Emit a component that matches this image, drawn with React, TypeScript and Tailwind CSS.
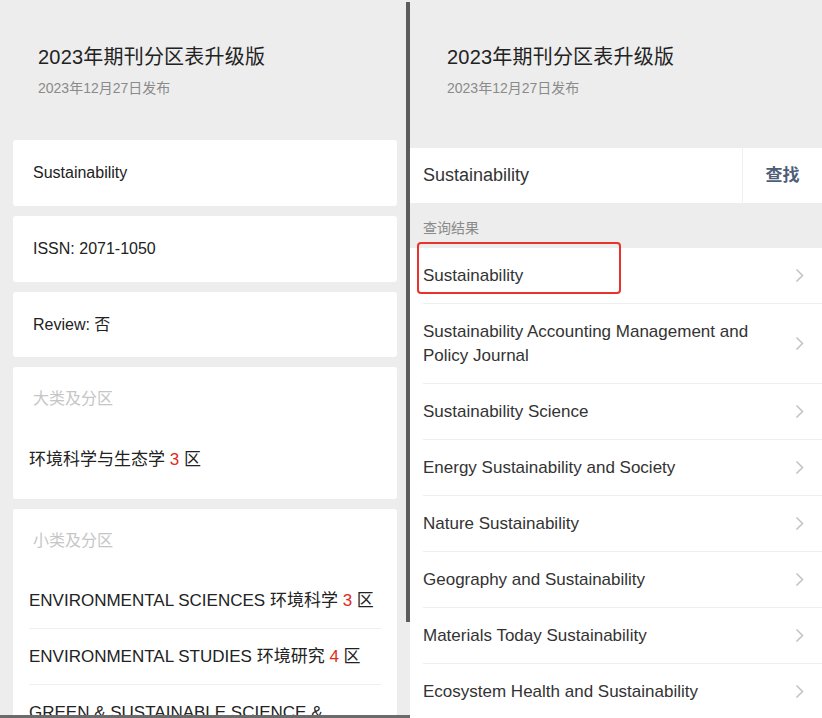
import React from "react"

const results: string[][] = [
  ["Sustainability"],
  ["Sustainability Accounting Management and", "Policy Journal"],
  ["Sustainability Science"],
  ["Energy Sustainability and Society"],
  ["Nature Sustainability"],
  ["Geography and Sustainability"],
  ["Materials Today Sustainability"],
  ["Ecosystem Health and Sustainability"],
]

const minor = [
  { en: "ENVIRONMENTAL SCIENCES", zh: "环境科学", zone: "3" },
  { en: "ENVIRONMENTAL STUDIES", zh: "环境研究", zone: "4" },
  { en: "GREEN & SUSTAINABLE SCIENCE &", zh: "", zone: "" },
]

function Chevron() {
  return (
    <svg width="9" height="15" viewBox="0 0 9 15" fill="none" className="shrink-0">
      <polyline points="1.5,1.5 7.5,7.5 1.5,13.5" stroke="#c4c4c4" strokeWidth="1.6" />
    </svg>
  )
}

function Header() {
  return (
    <div className="pt-[45px]">
      <div className="text-[20px] leading-[24px] tracking-[0.2px] text-[#222]">2023年期刊分区表升级版</div>
      <div className="mt-[9px] text-[14px] leading-[20px] text-[#8a8a8a]">2023年12月27日发布</div>
    </div>
  )
}

function LeftPanel() {
  return (
    <div className="relative w-[410px] shrink-0 h-full overflow-hidden">
      <div className="px-[13px]">
        <div className="h-[140px] pl-[25px]">
          <Header />
        </div>
        <div className="flex flex-col gap-[10px]">
          <div className="h-[66px] bg-white rounded-[3px] flex items-center px-[20px] text-[16px] text-[#222]">
            Sustainability
          </div>
          <div className="h-[66px] bg-white rounded-[3px] flex items-center px-[20px] text-[16px] text-[#222]">
            ISSN: 2071-1050
          </div>
          <div className="h-[65px] bg-white rounded-[3px] flex items-center px-[20px] text-[16px] text-[#222]">
            Review: 否
          </div>
          <div className="h-[132px] bg-white rounded-[3px] pt-[21px] leading-[22px]">
            <div className="pl-[20px] text-[16px] text-[#c6c6c6]">大类及分区</div>
            <div className="mt-[39px] pl-[16px] text-[17px] text-[#222]">
              环境科学与生态学 <span className="text-[#e02b20]">3</span> 区
            </div>
          </div>
          <div className="bg-white rounded-[3px] pt-[21px] leading-[22px]">
            <div className="pl-[20px] text-[16px] text-[#c6c6c6]">小类及分区</div>
            <div className="mt-[21px] px-[16px] text-[17px]">
              {minor.map((m) => (
                <div key={m.en} className="h-[56px] flex items-center border-b border-[#efefef] text-[#222]">
                  <span>
                    {m.en} {m.zh}
                    {m.zone && (
                      <>
                        {" "}
                        <span className="text-[#e02b20]">{m.zone}</span> 区
                      </>
                    )}
                  </span>
                </div>
              ))}
            </div>
          </div>
        </div>
      </div>
      <div className="absolute right-0 top-[2px] w-[4px] h-[620px] bg-[#5c5c5c]" />
      <div className="absolute left-0 right-0 bottom-0 h-[3px] bg-[#6b6b6b]" />
    </div>
  )
}

function RightPanel() {
  return (
    <div className="flex-1 h-full overflow-hidden">
      <div className="h-[148px] pl-[37px]">
        <Header />
      </div>
      <div className="h-[55px] bg-white flex">
        <div className="flex-1 flex items-center pl-[13px] text-[18px] text-[#333]">Sustainability</div>
        <div className="w-[80px] border-l border-[#f0f0f0] flex items-center justify-center text-[17px] font-bold text-[#4f5e78]">
          查找
        </div>
      </div>
      <div className="h-[45px] pl-[13px] pt-[15px] text-[14px] leading-[20px] text-[#8a8a8a]">查询结果</div>
      <div className="relative bg-white pl-[13px]">
        {results.map((r, i) => (
          <div
            key={i}
            className={`flex items-center justify-between pr-[18px] border-b border-[#efefef] text-[17px] leading-[24px] text-[#333] ${
              r.length > 1 ? "h-[80px]" : "h-[56px]"
            }`}
          >
            <div>
              {r.map((line) => (
                <div key={line}>{line}</div>
              ))}
            </div>
            <Chevron />
          </div>
        ))}
        <div className="absolute left-[7px] top-[-6px] w-[204px] h-[52px] border-2 border-[#e8322b] rounded-[4px]" />
      </div>
    </div>
  )
}

export default function App() {
  return (
    <div className="flex w-[822px] h-[718px] overflow-hidden bg-[#ededed] font-['Liberation_Sans','Noto_Sans_CJK_SC',sans-serif]">
      <LeftPanel />
      <RightPanel />
    </div>
  )
}
